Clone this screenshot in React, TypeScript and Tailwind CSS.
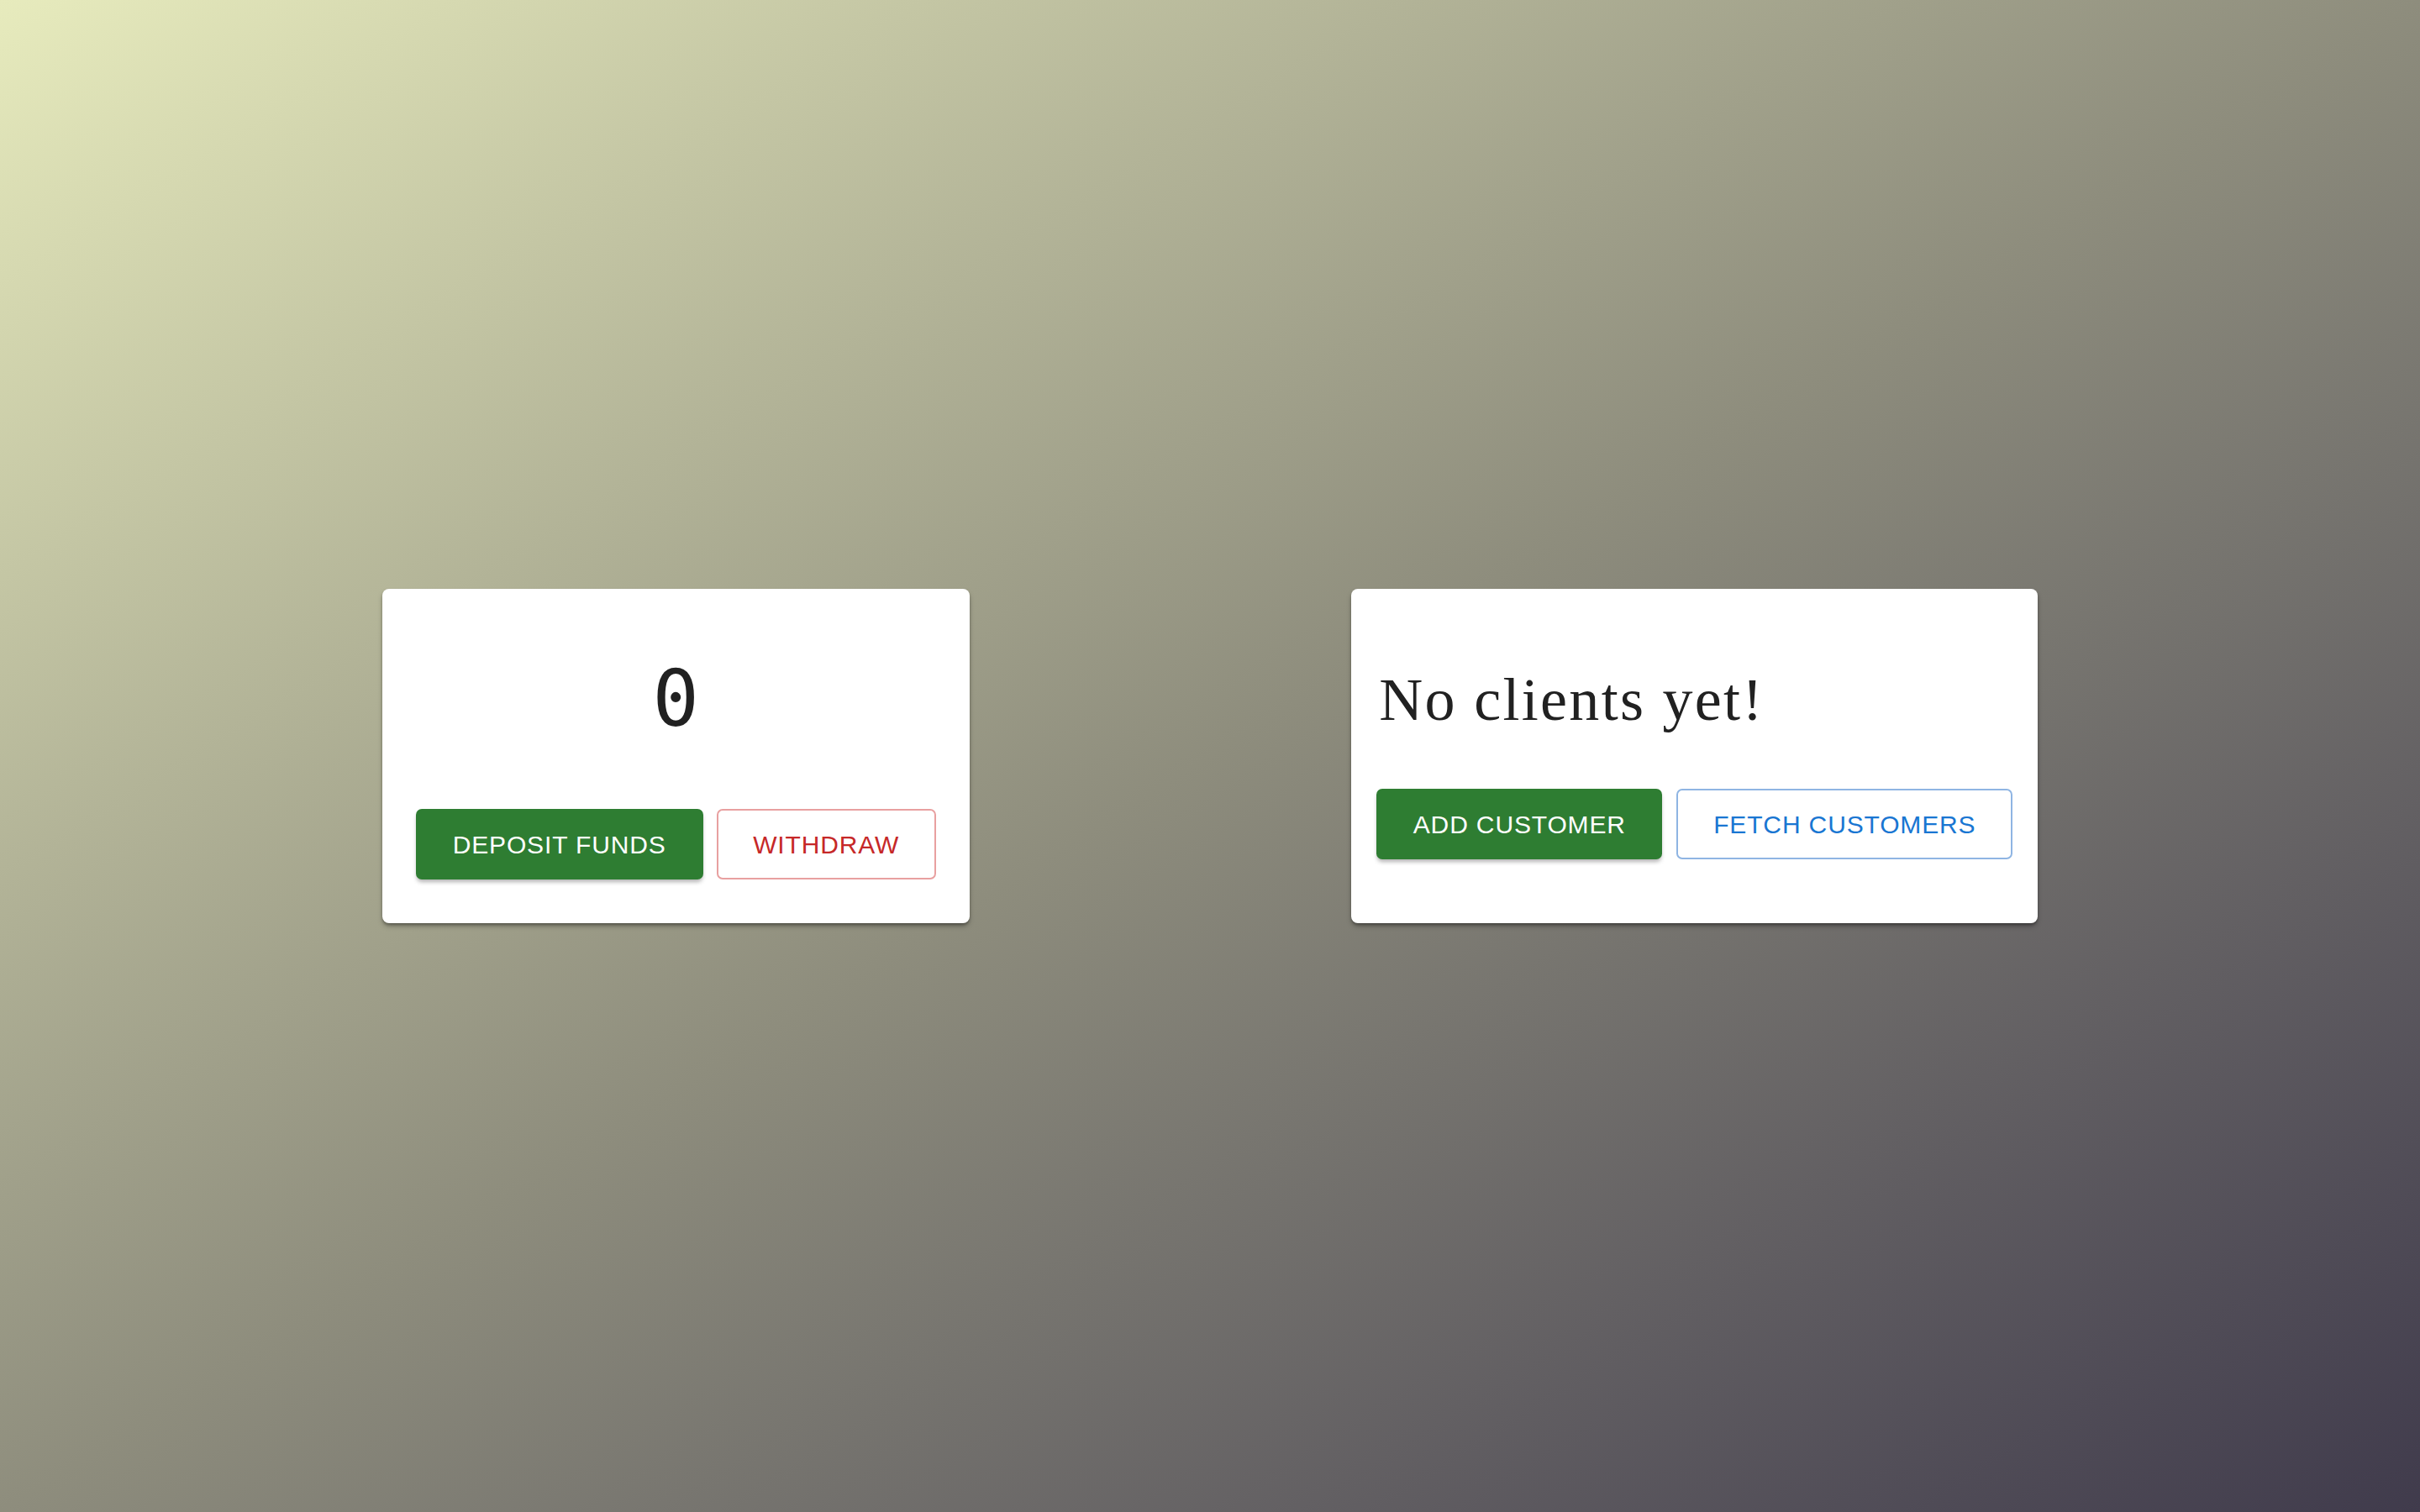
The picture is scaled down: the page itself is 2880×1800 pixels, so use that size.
const sans = "font-['Liberation_Sans',Arial,sans-serif]";

function Card({ className, children }: { className: string; children: React.ReactNode }) {
  return (
    <div
      className={`bg-white rounded-[8px] shadow-[0_4px_6px_-1px_rgba(0,0,0,0.35),0_2px_3px_rgba(0,0,0,0.2)] ${className}`}
    >
      {children}
    </div>
  );
}

export default function App() {
  return (
    <div className="min-h-screen w-full flex items-center justify-evenly bg-gradient-to-br from-[#e7ebbd] via-[#8e8d7d] to-[#403b4c]">
      {/* balance card */}
      <Card className="w-[699px] h-[398px] flex flex-col items-center pt-[86px] px-[40px]">
        <div className="h-[92px] text-[92px] leading-[92px] text-[#212121] font-['DejaVu_Sans_Mono',monospace]">
          0
        </div>
        <div className="mt-[84px] flex gap-[16px] w-full">
          <button
            className={`h-[84px] w-[342px] rounded-[7px] bg-[#2e7d32] text-white text-[30px] tracking-[0.86px] uppercase shadow-[0_4px_5px_-1px_rgba(0,0,0,0.3)] ${sans}`}
          >
            Deposit Funds
          </button>
          <button
            className={`h-[84px] w-[261px] rounded-[7px] border-2 border-[#e8a0a0] bg-white text-[#c62828] text-[30px] tracking-[0.86px] uppercase ${sans}`}
          >
            Withdraw
          </button>
        </div>
      </Card>

      {/* customers card */}
      <Card className="w-[817px] h-[398px] flex flex-col pt-[96px] px-[30px]">
        <h3 className="h-[72px] pl-[3px] text-[72px] leading-[72px] tracking-[2.3px] text-[#212121] font-['Liberation_Serif',serif]">
          No clients yet!
        </h3>
        <div className="mt-[70px] flex gap-[17px]">
          <button
            className={`h-[84px] w-[340px] rounded-[7px] bg-[#2e7d32] text-white text-[30px] tracking-[0.86px] uppercase shadow-[0_4px_5px_-1px_rgba(0,0,0,0.3)] ${sans}`}
          >
            Add Customer
          </button>
          <button
            className={`h-[84px] w-[400px] rounded-[7px] border-2 border-[#8fb5e3] bg-white text-[#1976d2] text-[30px] tracking-[0.86px] uppercase ${sans}`}
          >
            Fetch Customers
          </button>
        </div>
      </Card>
    </div>
  );
}
